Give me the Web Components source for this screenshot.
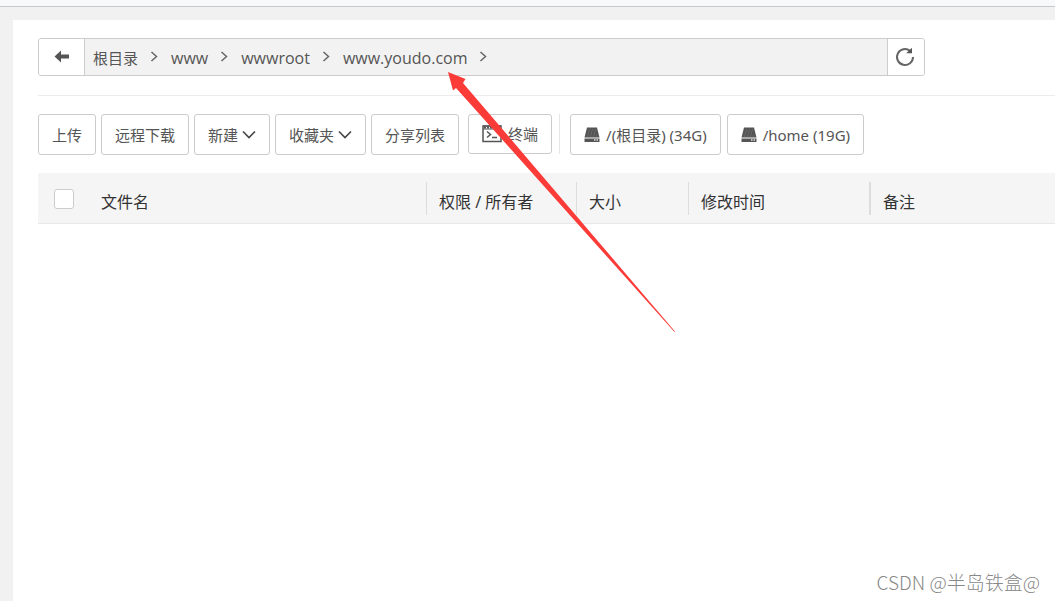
<!DOCTYPE html>
<html lang="zh-CN">
<head>
<meta charset="UTF-8">
<meta name="viewport" content="width=device-width, initial-scale=1.0">
<title>文件管理</title>
<style>
    body {
        margin: 0;
        min-height: 100vh;
        display: flex;
        flex-direction: column;
        position: relative;
        overflow-x: hidden;
        background: #f1f1f1;
        color: #555;
        font-family: "Open Sans", "Noto Sans CJK SC", sans-serif;
        font-size: 15px;
    }
</style>
</head>
<body>
    <top-strip></top-strip>
    <file-panel>
        <path-bar>
            <path-crumb>根目录</path-crumb>
            <path-crumb>www</path-crumb>
            <path-crumb>wwwroot</path-crumb>
            <path-crumb>www.youdo.com</path-crumb>
        </path-bar>
        <tool-bar>
            <tool-button>上传</tool-button>
            <tool-button>远程下载</tool-button>
            <tool-button icon="down">新建</tool-button>
            <tool-button icon="down">收藏夹</tool-button>
            <tool-button>分享列表</tool-button>
            <tool-button slot="terminal" icon="terminal">终端</tool-button>
            <tool-button slot="disks" icon="disk">/(根目录) (34G)</tool-button>
            <tool-button slot="disks" icon="disk">/home (19G)</tool-button>
        </tool-bar>
        <file-table></file-table>
    </file-panel>
    <pointer-arrow></pointer-arrow>
    <water-mark>CSDN @半岛铁盒@</water-mark>

<script>
    class TopStrip extends HTMLElement {
        connectedCallback() {
            this.attachShadow({ mode: 'open' });
            this.shadowRoot.innerHTML = `
                <style>
                    :host {
                        display: block;
                        height: 6px;
                        background: #f8f9fb;
                        border-bottom: 1px solid #c9c9c9;
                    }
                </style>
            `;
        }
    }

    class FilePanel extends HTMLElement {
        connectedCallback() {
            this.attachShadow({ mode: 'open' });
            this.shadowRoot.innerHTML = `
                <style>
                    :host {
                        display: block;
                        flex: 1;
                        margin: 13px 0 0 13px;
                        padding: 18px 0 0 25px;
                        background: #fff;
                    }
                </style>
                <slot></slot>
            `;
        }
    }

    class PathBar extends HTMLElement {
        connectedCallback() {
            this.attachShadow({ mode: 'open' });
            this.shadowRoot.innerHTML = `
                <style>
                    :host {
                        display: block;
                        padding-bottom: 19px;
                        border-bottom: 1px solid #ececec;
                    }

                    .bar {
                        display: flex;
                        box-sizing: border-box;
                        height: 38px;
                        margin-right: 130px;
                        border: 1px solid #ccc;
                        border-radius: 3px;
                        background: #f2f2f2;
                        overflow: hidden;
                    }

                    button {
                        display: flex;
                        align-items: center;
                        justify-content: center;
                        box-sizing: border-box;
                        padding: 0;
                        border: 0;
                        background: #fff;
                        cursor: pointer;
                    }

                    .back {
                        width: 46px;
                        border-right: 1px solid #ccc;
                    }

                    .refresh {
                        width: 37px;
                        padding-right: 2px;
                        border-left: 1px solid #ccc;
                    }

                    nav {
                        flex: 1;
                        display: flex;
                        align-items: center;
                        padding-left: 8px;
                    }
                </style>
                <div class="bar">
                    <button class="back" aria-label="返回">
                        <svg width="16" height="14" viewBox="0 0 16 14">
                            <path d="M0.5 6.5 7 0.5V4.5H15V8.5H7V12.5Z" fill="#555"/>
                        </svg>
                    </button>
                    <nav><slot></slot></nav>
                    <button class="refresh" aria-label="刷新">
                        <svg width="20" height="20" viewBox="0 0 20 20" fill="none" stroke="#666" stroke-width="2">
                            <path d="M18 10A8 8 0 1 1 15 3.8"/>
                            <path d="M17 0.8V6.2H11.2Z" fill="#555" stroke="none"/>
                        </svg>
                    </button>
                </div>
            `;
        }
    }

    class PathCrumb extends HTMLElement {
        connectedCallback() {
            this.attachShadow({ mode: 'open' });
            this.shadowRoot.innerHTML = `
                <style>
                    :host {
                        display: flex;
                        align-items: center;
                    }

                    a {
                        padding-top: 2px;
                        color: #555;
                        font-size: 16px;
                        line-height: 24px;
                        text-decoration: none;
                    }

                    :host(:first-child) a {
                        font-size: 15px;
                    }

                    svg {
                        margin: 0 12px;
                    }
                </style>
                <a href="#"><slot></slot></a>
                <svg width="9" height="12" viewBox="0 0 9 12" fill="none" stroke="#666" stroke-width="1.5">
                    <path d="M1.5 1 6.5 5.5 1.5 10"/>
                </svg>
            `;
        }
    }

    class ToolBar extends HTMLElement {
        connectedCallback() {
            this.attachShadow({ mode: 'open' });
            this.shadowRoot.innerHTML = `
                <style>
                    :host {
                        display: flex;
                        align-items: flex-start;
                        padding: 18px 0;
                        font-family: "Noto Sans", "Noto Sans CJK SC", sans-serif;
                    }

                    .group {
                        display: flex;
                        gap: 5px;
                    }

                    .terminal {
                        margin-left: 9px;
                        padding-right: 7px;
                        border-right: 1px solid #e6e6e6;
                    }

                    .disks {
                        gap: 6px;
                        margin-left: 10px;
                    }
                </style>
                <div class="group"><slot></slot></div>
                <div class="group terminal"><slot name="terminal"></slot></div>
                <div class="group disks"><slot name="disks"></slot></div>
            `;
        }
    }

    const icons = {
        down: `
            <svg width="14" height="10" viewBox="0 0 14 10" fill="none" stroke="#444" stroke-width="1.6">
                <path d="M1 1.5 7 7.5 13 1.5"/>
            </svg>`,
        terminal: `
            <svg width="20" height="18" viewBox="0 0 20 18" fill="none" stroke="#555">
                <path d="M1 1H19V16.5H1Z" stroke-width="1.5"/>
                <path d="M1 1H19M1 4H19"/>
                <path d="M2 2.5H18" stroke-width="2" stroke-dasharray="2 1"/>
                <path d="M5 6.5 8.5 9.5 5 12.5M10 12.5H15" stroke-width="1.5"/>
            </svg>`,
        disk: `
            <svg width="16" height="16" viewBox="0 0 16 16">
                <path d="M3 0.5H13L15.5 10.5H0.5Z" fill="#555"/>
                <path d="M0.5 11.5H15.5V15H0.5Z" fill="#555"/>
                <path d="M10 13H11.5M12.5 13H14" stroke="#ddd" stroke-width="1.5"/>
                <path d="M5 3H12M4 5H13M4 7H13M3 9H13" stroke="#777" stroke-dasharray="1 2"/>
            </svg>`
    };

    class ToolButton extends HTMLElement {
        connectedCallback() {
            const name = this.getAttribute('icon');
            const icon = icons[name] || '';
            const after = name === 'down';

            this.attachShadow({ mode: 'open' });
            this.shadowRoot.innerHTML = `
                <style>
                    :host {
                        display: block;
                    }

                    button {
                        display: flex;
                        align-items: center;
                        gap: 6px;
                        height: 41px;
                        padding: 0 13px;
                        border: 1px solid #ccc;
                        border-radius: 3px;
                        background: #fff;
                        color: #555;
                        font: inherit;
                        line-height: 22px;
                        white-space: nowrap;
                        cursor: pointer;
                    }

                    :host([icon="down"]) button {
                        gap: 4px;
                    }

                    :host([icon="terminal"]) button {
                        height: 40px;
                    }
                </style>
                <button>${after ? '' : icon}<span><slot></slot></span>${after ? icon : ''}</button>
            `;
        }
    }

    class FileTable extends HTMLElement {
        connectedCallback() {
            this.attachShadow({ mode: 'open' });
            this.shadowRoot.innerHTML = `
                <style>
                    :host {
                        display: block;
                        font-family: "Noto Sans", "Noto Sans CJK SC", sans-serif;
                    }

                    table {
                        width: 100%;
                        table-layout: fixed;
                        border-collapse: collapse;
                        background: #f5f5f5;
                    }

                    th {
                        padding: 9px 0 8px;
                        border-bottom: 1px solid #e8e8e8;
                        color: #333;
                        font-size: 16px;
                        font-weight: normal;
                        text-align: left;
                    }

                    .name { width: 388px; }
                    .owner { width: 150px; }
                    .size { width: 112px; }
                    .time { width: 181px; }

                    .cell {
                        display: flex;
                        align-items: center;
                        height: 33px;
                        padding-left: 12px;
                        border-left: 1px solid #ddd;
                    }

                    .cell span {
                        padding-top: 4px;
                    }

                    .name .cell {
                        gap: 27px;
                        padding-left: 16px;
                        border-left: 0;
                    }

                    .note .cell {
                        border-left-width: 2px;
                    }

                    input {
                        appearance: none;
                        box-sizing: border-box;
                        width: 20px;
                        height: 20px;
                        margin: 0;
                        border: 1px solid #ccc;
                        border-radius: 3px;
                        background: #fff;
                    }
                </style>
                <table>
                    <thead>
                        <tr>
                            <th class="name"><div class="cell"><input type="checkbox" aria-label="全选"><span>文件名</span></div></th>
                            <th class="owner"><div class="cell"><span>权限 / 所有者</span></div></th>
                            <th class="size"><div class="cell"><span>大小</span></div></th>
                            <th class="time"><div class="cell"><span>修改时间</span></div></th>
                            <th class="note"><div class="cell"><span>备注</span></div></th>
                        </tr>
                    </thead>
                </table>
            `;
        }
    }

    // red arrow laid over the page, tip on the site folder in the path bar
    class PointerArrow extends HTMLElement {
        connectedCallback() {
            this.attachShadow({ mode: 'open' });
            this.shadowRoot.innerHTML = `
                <style>
                    :host {
                        display: block;
                        position: absolute;
                        left: 448px;
                        top: 72px;
                        pointer-events: none;
                    }

                    svg {
                        display: block;
                    }
                </style>
                <svg width="228" height="261" viewBox="0 0 228 261">
                    <path d="M0 0 17.5 7 15 11 227 259.5 226.5 260 8 16 5 18.5Z" fill="#fb3b38"/>
                </svg>
            `;
        }
    }

    class WaterMark extends HTMLElement {
        connectedCallback() {
            this.attachShadow({ mode: 'open' });
            this.shadowRoot.innerHTML = `
                <style>
                    :host {
                        display: block;
                        position: absolute;
                        right: 15px;
                        bottom: 5px;
                        color: #888;
                        font-family: "Noto Sans CJK SC", sans-serif;
                        font-size: 19px;
                        font-weight: 300;
                        line-height: 28px;
                    }
                </style>
                <slot></slot>
            `;
        }
    }

    customElements.define('top-strip', TopStrip);
    customElements.define('file-panel', FilePanel);
    customElements.define('path-bar', PathBar);
    customElements.define('path-crumb', PathCrumb);
    customElements.define('tool-bar', ToolBar);
    customElements.define('tool-button', ToolButton);
    customElements.define('file-table', FileTable);
    customElements.define('pointer-arrow', PointerArrow);
    customElements.define('water-mark', WaterMark);
</script>
</body>
</html>
